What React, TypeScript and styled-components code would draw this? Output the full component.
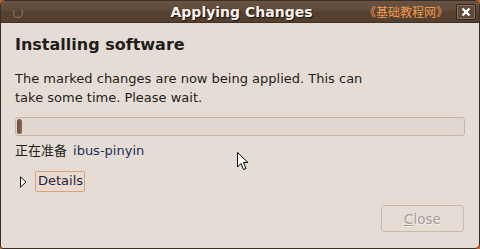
import React from "react";
import styled, { createGlobalStyle } from "styled-components";

const Global = createGlobalStyle`
  html, body { margin: 0; padding: 0; background: #c8642a; }
  body { font-family: "DejaVu Sans", "Noto Sans CJK SC", sans-serif; }
`;

const Window = styled.div`
  width: 480px;
  height: 249px;
  box-sizing: border-box;
  display: flex;
  flex-direction: column;
  background: #e5ddd5;
  border: 1px solid #3a2e26;
  border-radius: 5px 5px 5px 3px;
  overflow: hidden;
  position: relative;
`;

const TitleBar = styled.div`
  height: 21px;
  flex: none;
  display: grid;
  grid-template-columns: 1fr auto 1fr;
  align-items: center;
  background: linear-gradient(#6a5343 0px, #5e4939 10px, #564131 11px, #554030 21px);
  border-bottom: 1px solid #3d3027;
  padding: 0 3px 0 12px;
`;

const Spinner = styled.div`
  width: 8px;
  height: 8px;
  border-radius: 50%;
  border: 1px solid #8e7b6c;
  border-top-color: #5a4636;
  margin-top: 2px;
`;

const Title = styled.div`
  font-weight: bold;
  font-size: 14px;
  color: #f6f2ee;
  text-shadow: 1px 1px 1px #140e0a;
  margin-left: -6px;
`;

const TitleRight = styled.div`
  display: flex;
  align-items: center;
  justify-content: flex-end;
  gap: 8px;
`;

const Watermark = styled.span`
  color: #f39a4c;
  font-size: 12px;
  font-family: "Noto Sans CJK SC", sans-serif;
`;

const CloseBox = styled.div`
  width: 20px;
  height: 16px;
  box-sizing: border-box;
  border: 1px solid #2f241d;
  border-radius: 2px;
  background: #5e4a3b;
  box-shadow: inset 0 0 0 1px #8a7463;
  display: flex;
  align-items: center;
  justify-content: center;
`;

const Content = styled.div`
  flex: 1;
  display: flex;
  flex-direction: column;
  padding: 12px 14px 0 14px;
  color: #221d1a;
`;

const Heading = styled.div`
  font-weight: bold;
  font-size: 16px;
  line-height: 20px;
`;

const Para = styled.div`
  margin-top: 14px;
  font-size: 13px;
  line-height: 19px;
`;

const Progress = styled.div`
  margin-top: 10px;
  height: 19px;
  width: 450px;
  box-sizing: border-box;
  border: 1px solid #c8b5a6;
  border-radius: 3px;
  background: #e0d7d0;
  padding: 1px;
  display: flex;
`;

const Fill = styled.div`
  background: linear-gradient(90deg, #6b4c3a, #8a6a56);
  border-radius: 3px;
  height: 100%;
`;

const Status = styled.div`
  margin-top: 6px;
  font-size: 13px;
  line-height: 18px;
  display: flex;
  gap: 6px;
`;

const Pkg = styled.span`
  color: #1e2c55;
`;

const ExpanderRow = styled.div`
  margin-top: 11px;
  display: flex;
  align-items: center;
  gap: 8px;
  padding-left: 5px;
`;

const DetailsBtn = styled.div`
  font-size: 13px;
  color: #1f2440;
  border: 1px solid #d8a27c;
  border-radius: 2px;
  background: #eadbce;
  padding: 1px 1px 2px 2px;
  line-height: 16px;
`;

const Footer = styled.div`
  display: flex;
  justify-content: flex-end;
  margin-top: 13px;
  padding-right: 1px;
`;

const Button = styled.div`
  width: 83px;
  height: 27px;
  box-sizing: border-box;
  border: 1px solid #cbb9aa;
  border-radius: 3px;
  display: flex;
  align-items: center;
  justify-content: center;
  font-size: 13.5px;
  color: #a99d94;
  text-shadow: 1px 1px 0 #f4efea;
`;

const Cursor = styled.svg`
  position: absolute;
  left: 236px;
  top: 151px;
`;

export default function App() {
  return (
    <>
      <Global />
      <Window>
        <TitleBar>
          <Spinner />
          <Title>Applying Changes</Title>
          <TitleRight>
            <Watermark>《基础教程网》</Watermark>
            <CloseBox>
              <svg width="10" height="10" viewBox="0 0 10 10">
                <path d="M1.5 1.5 L8.5 8.5 M8.5 1.5 L1.5 8.5" stroke="#ffffff" strokeWidth="2.4" />
              </svg>
            </CloseBox>
          </TitleRight>
        </TitleBar>
        <Content>
          <Heading>Installing software</Heading>
          <Para>
            The marked changes are now being applied. This can
            <br />
            take some time. Please wait.
          </Para>
          <Progress>
            <Fill style={{ width: "5px" }} />
          </Progress>
          <Status>
            <span>正在准备</span>
            <Pkg>ibus-pinyin</Pkg>
          </Status>
          <ExpanderRow>
            <svg width="7" height="12" viewBox="0 0 7 12">
              <path d="M0.5 0.8 L6 6 L0.5 11.2 Z" fill="#ffffff" stroke="#111" strokeWidth="1" />
            </svg>
            <DetailsBtn>Details</DetailsBtn>
          </ExpanderRow>
          <Footer>
            <Button>
              <span>
                <u>C</u>lose
              </span>
            </Button>
          </Footer>
        </Content>
        <Cursor width="13" height="20" viewBox="0 0 13 20">
          <path d="M0.5 0.5 L0.5 15 L4 11.5 L6.5 17.5 L9 16.5 L6.5 10.5 L11 10.5 Z" fill="#fff" stroke="#000" strokeWidth="1" />
        </Cursor>
      </Window>
    </>
  );
}
